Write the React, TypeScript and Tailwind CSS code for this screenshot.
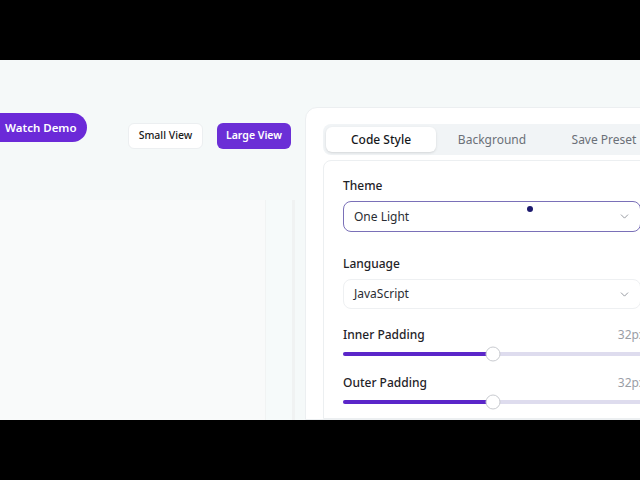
import { ChevronDown } from "lucide-react";

const Slider = ({ label, value, pct }: { label: string; value: string; pct: number }) => (
  <div className="flex flex-col">
    <div className="flex items-center justify-between w-[302px]">
      <span className="text-[12px] font-medium text-[#1f2328]">{label}</span>
      <span className="text-[12px] text-[#9a9ea6]">{value}</span>
    </div>
    <div className="relative mt-[8px] h-[4px] w-[300px] rounded-full bg-[#dedcee]">
      <div className="h-full rounded-full bg-[#5b26c9]" style={{ width: `${pct}%` }} />
      <div
        className="absolute top-1/2 h-[15px] w-[15px] -translate-x-1/2 -translate-y-1/2 rounded-full border border-[#c9cbd0] bg-white"
        style={{ left: `${pct}%` }}
      />
    </div>
  </div>
);

export default function App() {
  return (
    <div className="flex h-[480px] w-[640px] flex-col overflow-hidden bg-black font-['Noto_Sans',sans-serif]">
      <div className="h-[60px] shrink-0" />
      <div className="flex h-[360px] shrink-0 overflow-hidden bg-[#f5f9f9]">
        {/* left column */}
        <div className="flex w-[305px] shrink-0 flex-col">
          <div className="flex items-start">
            <button className="ml-[-30px] mt-[53px] flex h-[29px] w-[117px] items-center rounded-full bg-[#6b2ad8] pl-[35px] text-[11.5px] font-semibold text-white">
              Watch Demo
            </button>
            <div className="ml-auto mr-[14px] mt-[63px] flex gap-[14px]">
              <button className="flex h-[26px] w-[75px] items-center justify-center rounded-md border border-[#eceff1] bg-white text-[10.5px] font-medium text-[#1a1a1a]">
                Small View
              </button>
              <button className="flex h-[26px] w-[74px] items-center justify-center rounded-md bg-[#6b2fd6] text-[10.5px] font-semibold text-white">
                Large View
              </button>
            </div>
          </div>
          <div className="mt-[51px] flex flex-1">
            <div className="w-[265px] bg-[#f9fafa]" />
            <div className="w-[27px] border-l border-[#f1f3f3] bg-[#f6fafa]" />
            <div className="w-[3px] bg-[#f0f2f2]" />
          </div>
        </div>
        {/* right panel */}
        <div className="mt-[47px] flex w-[380px] shrink-0 flex-col rounded-t-xl border border-[#eceff1] bg-white pl-[17px] pt-[16px]">
          <div className="flex h-[31px] w-[340px] items-center rounded-lg bg-[#f1f4f6] px-[3px]">
            <div className="flex h-[25px] w-[110px] items-center justify-center rounded-md bg-white text-[12px] font-medium text-[#16181c] shadow-sm">
              Code Style
            </div>
            <div className="flex w-[112px] items-center justify-center text-[12px] text-[#6b7078]">Background</div>
            <div className="flex w-[112px] items-center justify-center text-[12px] text-[#6b7078]">Save Preset</div>
          </div>
          <div className="mt-[5px] flex w-[350px] flex-1 flex-col rounded-t-lg border border-[#eceff1] bg-white pl-[19px] pt-[16px]">
            <span className="text-[12px] font-medium text-[#1f2328]">Theme</span>
            <div className="relative mt-[6px] flex h-[31px] w-[298px] items-center justify-between rounded-lg border border-[#7a70b8] pl-[10px] pr-[9px]">
              <span className="text-[12px] text-[#2a2d33]">One Light</span>
              <ChevronDown className="h-[13px] w-[13px] text-[#80848c]" strokeWidth={1.5} />
              <div className="absolute left-[183px] top-[4px] h-[6px] w-[6px] rounded-full bg-[#1d1a6e]" />
            </div>
            <span className="mt-[23px] text-[12px] font-medium text-[#1f2328]">Language</span>
            <div className="mt-[6px] flex h-[30px] w-[298px] items-center justify-between rounded-lg border border-[#eef0f2] pl-[10px] pr-[9px]">
              <span className="text-[12px] text-[#2a2d33]">JavaScript</span>
              <ChevronDown className="h-[13px] w-[13px] text-[#80848c]" strokeWidth={1.5} />
            </div>
            <div className="mt-[17px] flex flex-col gap-[18px]">
              <Slider label="Inner Padding" value="32px" pct={50} />
              <Slider label="Outer Padding" value="32px" pct={50} />
            </div>
          </div>
        </div>
      </div>
      <div className="h-[60px] shrink-0" />
    </div>
  );
}
